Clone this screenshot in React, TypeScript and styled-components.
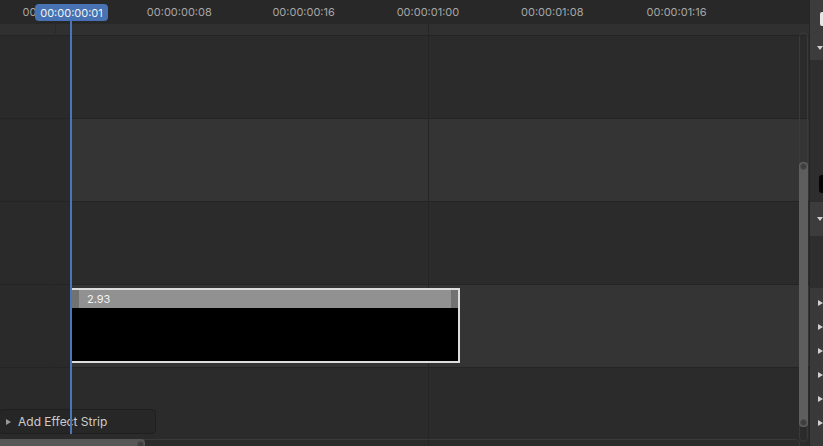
import React from "react";
import styled, { createGlobalStyle } from "styled-components";

const FPS = 24;
const FRAME_PX = 15.54;
const ORIGIN_X = 55;
const frameX = (f: number) => Math.round(ORIGIN_X + f * FRAME_PX);

const pad = (n: number) => String(n).padStart(2, "0");
const timecode = (f: number) =>
  `00:00:${pad(Math.floor(f / FPS))}:${pad(f % FPS)}`;

const rulerFrames = [0, 8, 16, 24, 32, 40];
const gridFrames = [0, 24];
const channels = [false, true, false, true, false];
const panelRows = [0, 1, 2, 3, 4, 5];

const GlobalStyle = createGlobalStyle`
  html, body {
    margin: 0;
    padding: 0;
    background: #2a2a2a;
    overflow: hidden;
  }
  * {
    box-sizing: border-box;
  }
`;

export default function App() {
  const current = 1;
  const strip = { start: 1, end: 26, label: "2.93" };
  // strip outline sits under the playhead when both start on the same frame
  const stripLeft = frameX(strip.start) - 1;

  return (
    <>
      <GlobalStyle />
      <Screen>
        <Editor>
          <Ruler>
            {rulerFrames.map((f) => (
              <RulerLabel key={f} style={{ left: ORIGIN_X + f * FRAME_PX }}>
                {timecode(f)}
              </RulerLabel>
            ))}
          </Ruler>
          <Band />
          <Channels>
            {channels.map((lit, i) => (
              <Channel key={i}>
                <OutOfRange />
                <InRange $lit={lit} />
              </Channel>
            ))}
          </Channels>

          {gridFrames.map((f) => (
            <GridLine key={f} $first={f === 0} style={{ left: frameX(f) }} />
          ))}

          <Strip
            style={{
              left: stripLeft,
              width: frameX(strip.end) - stripLeft + 1,
            }}
          >
            <StripHeader>
              <Handle />
              <StripName>{strip.label}</StripName>
              <Handle />
            </StripHeader>
            <StripBody />
          </Strip>

          <PlayheadLine style={{ left: frameX(current) - 1 }} />
          <PlayheadLabel>{timecode(current)}</PlayheadLabel>

          <VScroll>
            <VThumb>
              <ScrollKnob />
              <ScrollKnob />
            </VThumb>
          </VScroll>

          <HScroll>
            <HThumb>
              <ScrollKnob />
            </HThumb>
          </HScroll>

          <RedoPanel>
            <RedoArrow />
            Add Effect Strip
          </RedoPanel>
        </Editor>

        <Sidebar>
          <SideHeader $height={60} $arrowTop={46}>
            <WhiteTab />
            <DownArrow />
          </SideHeader>
          <SideGap $height={142} $tabTop={115}>
            <BlackTab />
          </SideGap>
          <SideHeader $height={34} $arrowTop={15}>
            <DownArrow />
          </SideHeader>
          <SideGap $height={52} $tabTop={0} />
          <PanelList>
            {panelRows.map((r) => (
              <PanelRow key={r}>
                <RightArrow />
              </PanelRow>
            ))}
          </PanelList>
        </Sidebar>
      </Screen>
    </>
  );
}

const Screen = styled.div`
  width: 823px;
  height: 446px;
  display: flex;
  overflow: hidden;
  font-family: Inter, "DejaVu Sans", sans-serif;
`;

const Editor = styled.div`
  position: relative;
  width: 810px;
  height: 100%;
  display: flex;
  flex-direction: column;
  overflow: hidden;
  border-right: 1px solid #262626;
`;

const Ruler = styled.div`
  position: relative;
  height: 24px;
  flex-shrink: 0;
  background: #282828;
`;

const RulerLabel = styled.span`
  position: absolute;
  top: 6px;
  transform: translateX(-50%);
  font-size: 11px;
  line-height: 13px;
  color: #a6a6a6;
  white-space: nowrap;
`;

const Band = styled.div`
  height: 11px;
  flex-shrink: 0;
  background: #303030;
`;

const Channels = styled.div`
  flex: 1;
  display: flex;
  flex-direction: column;
  overflow: hidden;
`;

const Channel = styled.div`
  height: 83px;
  flex-shrink: 0;
  display: flex;
  border-top: 1px solid #242424;
`;

const OutOfRange = styled.div`
  width: 71px;
  background: #2a2a2a;
`;

const InRange = styled.div<{ $lit: boolean }>`
  flex: 1;
  background: ${(p) => (p.$lit ? "#343434" : "#2b2b2b")};
`;

const GridLine = styled.div<{ $first: boolean }>`
  position: absolute;
  top: 24px;
  bottom: 0;
  width: 1px;
  background: ${(p) => (p.$first ? "#2a2a2a" : "#252525")};
`;

const Strip = styled.div`
  position: absolute;
  top: 288px;
  height: 75px;
  display: flex;
  flex-direction: column;
  border: 2px solid #dedede;
  background: #000;
`;

const StripHeader = styled.div`
  height: 18px;
  display: flex;
  align-items: center;
  background: #919191;
`;

const Handle = styled.div`
  width: 7px;
  height: 100%;
  background: #727272;
`;

const StripName = styled.span`
  flex: 1;
  padding-left: 8px;
  font-size: 11px;
  color: #f0f0f0;
`;

const StripBody = styled.div`
  flex: 1;
  background: #000;
`;

const PlayheadLine = styled.div`
  position: absolute;
  top: 20px;
  height: 414px;
  width: 2px;
  background: #4a76b8;
  z-index: 3;
`;

const PlayheadLabel = styled.div`
  position: absolute;
  left: 35px;
  top: 4px;
  width: 73px;
  height: 17px;
  display: flex;
  align-items: center;
  justify-content: center;
  border-radius: 4px;
  background: #4772b3;
  color: #f2f2f2;
  font-size: 11px;
  z-index: 4;
`;

const VScroll = styled.div`
  position: absolute;
  left: 799px;
  top: 32px;
  bottom: 4px;
  width: 9px;
  display: flex;
  flex-direction: column;
  justify-content: flex-end;
  padding-bottom: 14px;
  border: 1px solid #3a3a3a;
  border-radius: 5px;
`;

const VThumb = styled.div`
  height: 265px;
  margin: 0 -1px;
  display: flex;
  flex-direction: column;
  justify-content: space-between;
  align-items: center;
  padding: 1px 0;
  border-radius: 4px;
  background: #5e5e5e;
`;

const ScrollKnob = styled.div`
  width: 7px;
  height: 7px;
  border-radius: 50%;
  background: #3e3e3e;
  border: 1px solid #4c4c4c;
`;

const HScroll = styled.div`
  position: absolute;
  left: -4px;
  right: 9px;
  bottom: -3px;
  height: 10px;
  display: flex;
  border: 1px solid #3a3a3a;
  border-radius: 5px;
`;

const HThumb = styled.div`
  width: 148px;
  margin: -1px 0;
  display: flex;
  justify-content: flex-end;
  align-items: center;
  padding-right: 1px;
  border-radius: 4px;
  background: #575757;
`;

const RedoPanel = styled.div`
  position: absolute;
  left: -1px;
  top: 409px;
  width: 157px;
  height: 25px;
  display: flex;
  align-items: center;
  gap: 7px;
  padding-left: 6px;
  border: 1px solid #1f1f1f;
  border-radius: 4px;
  background: rgba(36, 36, 36, 0.6);
  color: #cccccc;
  font-size: 12px;
  z-index: 2;
`;

const RedoArrow = styled.span`
  width: 0;
  height: 0;
  border-top: 3px solid transparent;
  border-bottom: 3px solid transparent;
  border-left: 5px solid #9a9a9a;
`;

const Sidebar = styled.div`
  width: 13px;
  height: 100%;
  display: flex;
  flex-direction: column;
  background: #2e2e2e;
`;

const SideHeader = styled.div<{ $height: number; $arrowTop: number }>`
  position: relative;
  height: ${(p) => p.$height}px;
  flex-shrink: 0;
  display: flex;
  flex-direction: column;
  align-items: flex-end;
  padding-top: ${(p) => p.$arrowTop}px;
  background: #3c3c3c;
`;

const SideGap = styled.div<{ $height: number; $tabTop: number }>`
  height: ${(p) => p.$height}px;
  flex-shrink: 0;
  display: flex;
  justify-content: flex-end;
  padding-top: ${(p) => p.$tabTop}px;
  background: #2e2e2e;
`;

const WhiteTab = styled.div`
  position: absolute;
  top: 12px;
  right: 0;
  width: 3px;
  height: 14px;
  border-radius: 2px 0 0 2px;
  background: #e6e6e6;
`;

const BlackTab = styled.div`
  width: 4px;
  height: 18px;
  border-radius: 3px 0 0 3px;
  background: #050505;
`;

const DownArrow = styled.span`
  width: 0;
  height: 0;
  border-left: 3px solid transparent;
  border-right: 3px solid transparent;
  border-top: 4px solid #cfcfcf;
`;

const PanelList = styled.div`
  flex: 1;
  display: flex;
  flex-direction: column;
  padding-top: 12px;
  background: #393939;
`;

const PanelRow = styled.div`
  height: 24px;
  flex-shrink: 0;
  display: flex;
  align-items: flex-start;
  padding-left: 8px;
`;

const RightArrow = styled.span`
  width: 0;
  height: 0;
  border-top: 3px solid transparent;
  border-bottom: 3px solid transparent;
  border-left: 5px solid #cfcfcf;
`;
